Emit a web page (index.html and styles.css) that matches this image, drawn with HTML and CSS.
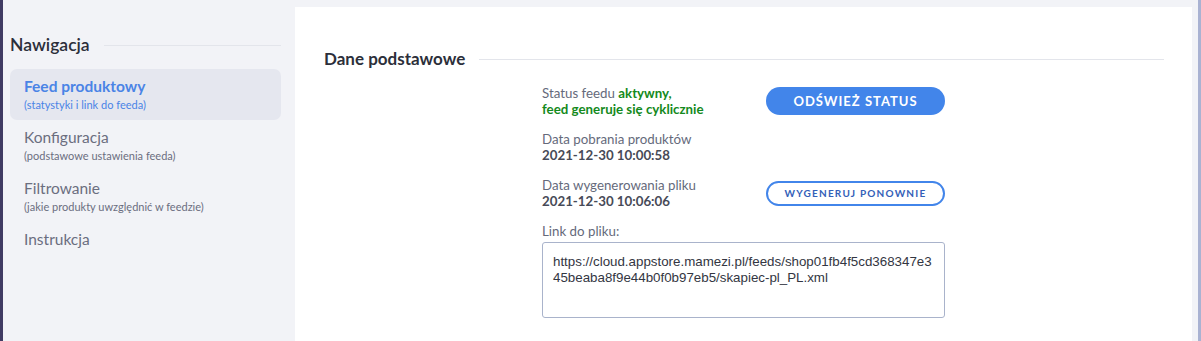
FILE: index.html
```html
<!DOCTYPE html>
<html lang="pl">
<head>
<meta charset="utf-8">
<title>Feed produktowy</title>
<link rel="stylesheet" href="styles.css">
</head>
<body>
<aside class="sidebar">
  <div class="nav-head">
    <h2 class="nav-title">Nawigacja</h2>
    <span class="rule"></span>
  </div>
  <nav class="nav">
    <a class="nav-item active" href="#">
      <span class="nav-label">Feed produktowy</span>
      <span class="nav-sub">(statystyki i link do feeda)</span>
    </a>
    <a class="nav-item" href="#">
      <span class="nav-label">Konfiguracja</span>
      <span class="nav-sub">(podstawowe ustawienia feeda)</span>
    </a>
    <a class="nav-item" href="#">
      <span class="nav-label">Filtrowanie</span>
      <span class="nav-sub">(jakie produkty uwzględnić w feedzie)</span>
    </a>
    <a class="nav-item" href="#">
      <span class="nav-label">Instrukcja</span>
    </a>
  </nav>
</aside>
<main class="card">
  <div class="section-head">
    <h2 class="section-title">Dane podstawowe</h2>
    <span class="rule"></span>
  </div>
  <div class="info">
    <div class="text">Status feedu <b class="ok">aktywny,<br>feed generuje się cyklicznie</b></div>
    <button class="btn btn-primary">Odśwież status</button>

    <div class="text">Data pobrania produktów<br><b class="date">2021-12-30 10:00:58</b></div>
    <div></div>

    <div class="text">Data wygenerowania pliku<br><b class="date">2021-12-30 10:06:06</b></div>
    <button class="btn btn-outline">Wygeneruj ponownie</button>

    <div class="link">
      <div class="text">Link do pliku:</div>
      <div class="url">https://cloud.appstore.mamezi.pl/feeds/shop01fb4f5cd368347e345beaba8f9e44b0f0b97eb5/skapiec-pl_PL.xml</div>
    </div>
  </div>
  <div class="section-head next">
    <h2 class="section-title">Statystyki dot. produktów</h2>
  </div>
</main>
</body>
</html>
```
FILE: styles.css
```css
* { box-sizing: border-box; }
html, body { height: 100%; }
body {
  margin: 0;
  display: flex;
  align-items: flex-start;
  background: #f2f3f7;
  border-left: 3px solid #403b63;
  border-right: 3px solid #a9b2d2;
  font-family: Lato, "Noto Sans", sans-serif;
  color: #656a7b;
  overflow: hidden;
}
.sidebar {
  width: 292px;
  flex: none;
  padding: 32px 14px 0 7px;
}
.nav-head {
  display: flex;
  align-items: center;
  gap: 14px;
  margin-bottom: 11px;
}
.nav-title {
  margin: 0;
  font-size: 17.5px;
  line-height: 26px;
  font-weight: 600;
  color: #2c2f3a;
}
.rule {
  flex: 1;
  height: 1px;
  background: #e3e5eb;
}
.nav { display: flex; flex-direction: column; }
.nav-item {
  display: flex;
  flex-direction: column;
  padding: 6px 14px 7px;
  border-radius: 7px;
  text-decoration: none;
  color: #6b6e7f;
}
.nav-item.active { background: #e5e7ef; color: #4a84e6; }
.nav-label { font-size: 15.5px; line-height: 22px; }
.active .nav-label { font-weight: 700; }
.nav-sub { font-size: 11px; line-height: 16px; }
.card {
  flex: 1;
  margin: 7px 6px 0 0;
  min-height: 334px;
  background: #fff;
  padding: 39px 28px 0 29px;
}
.section-head {
  display: flex;
  align-items: center;
  gap: 14px;
}
.section-title {
  margin: 0;
  font-size: 17px;
  line-height: 26px;
  font-weight: 700;
  color: #2c2f3a;
}
.info {
  display: grid;
  grid-template-columns: 224px 179px;
  row-gap: 14px;
  align-items: center;
  margin: 13px 0 0 218px;
}
.text { font-size: 13.3px; line-height: 16px; color: #656a7b; }
.ok { color: #148a1c; font-weight: 700; }
.date { color: #474a57; font-weight: 700; }
.btn {
  font-family: inherit;
  text-transform: uppercase;
  font-weight: 700;
  border-radius: 15px;
  cursor: pointer;
  padding: 0;
}
.btn-primary {
  height: 28px;
  border: 0;
  background: #4285ea;
  color: #fff;
  font-size: 13px;
  letter-spacing: 1px;
}
.btn-outline {
  height: 25px;
  border: 2px solid #4285ea;
  background: #fff;
  color: #3460b8;
  font-size: 10px;
  letter-spacing: 1.2px;
}
.link {
  grid-column: 1 / 3;
  display: flex;
  flex-direction: column;
  gap: 3px;
}
.url {
  height: 76px;
  border: 1px solid #a9b3cb;
  border-radius: 3px;
  padding: 11px 10px;
  font-family: "Liberation Sans", Arial, sans-serif;
  font-size: 13.33px;
  line-height: 16px;
  color: #333642;
  word-break: break-all;
}
.next { margin-top: 22px; }
```
